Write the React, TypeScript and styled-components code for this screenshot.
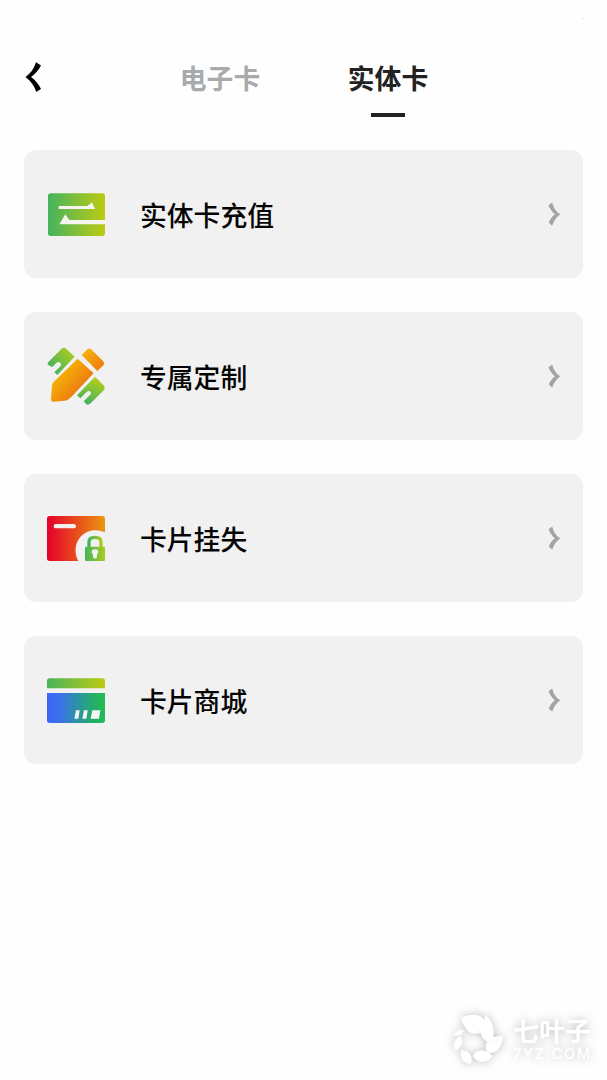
import React from "react";
import styled, { createGlobalStyle } from "styled-components";

const GlobalStyle = createGlobalStyle`
  * { box-sizing: border-box; }
  body { margin: 0; background: #fefefe; font-family: "Noto Sans CJK SC", sans-serif; }
`;

const Screen = styled.div`
  position: relative;
  width: 607px;
  height: 1080px;
  overflow: hidden;
  display: flex;
  flex-direction: column;
  background: #fefefe;
`;

const StatusDot = styled.i`
  position: absolute;
  left: 583px;
  top: 18px;
  width: 1px;
  height: 1px;
  background: #d2d2d2;
`;

const Header = styled.header`
  display: flex;
  align-items: flex-start;
  height: 150px;
  padding: 59px 0 0 20px;
`;

const BackButton = styled.button`
  width: 30px;
  height: 36px;
  padding: 0;
  border: 0;
  background: none;
  svg { display: block; }
`;

const Tabs = styled.nav`
  display: flex;
  gap: 88px;
  margin: -1px 0 0 130px;
`;

const Tab = styled.div<{ $active?: boolean }>`
  display: flex;
  flex-direction: column;
  align-items: center;
  width: 80px;
  font-size: 26.8px;
  line-height: 40px;
  font-weight: 700;
  white-space: nowrap;
  color: ${(p) => (p.$active ? "#222" : "#a9aaac")};
  &::after {
    content: "";
    width: 34px;
    height: 3.5px;
    margin-top: 15px;
    background: ${(p) => (p.$active ? "#222" : "transparent")};
  }
`;

const List = styled.main`
  display: flex;
  flex-direction: column;
  gap: 34px;
  padding: 0 24px;
`;

const Card = styled.div`
  display: flex;
  align-items: center;
  height: 128px;
  padding: 0 21px 0 22px;
  border-radius: 12px;
  background: #f1f1f1;
`;

const Label = styled.span`
  flex: 1;
  margin-left: 34px;
  padding-top: 2px;
  font-size: 26.8px;
  line-height: 40px;
  font-weight: 500;
  color: #050505;
`;

const Watermark = styled.div`
  position: absolute;
  left: 452px;
  top: 1008px;
  display: flex;
  align-items: center;
  color: #fff;
  filter: drop-shadow(0 0 5px rgba(0, 0, 0, 0.26));
`;

const WatermarkText = styled.div`
  display: flex;
  flex-direction: column;
  margin: 4px 0 0 9px;
  white-space: nowrap;
`;

const WatermarkName = styled.span`
  font-size: 26px;
  line-height: 26px;
  font-weight: 700;
`;

const WatermarkSite = styled.span`
  margin-top: 2px;
  font-family: Inter, sans-serif;
  font-size: 14.5px;
  line-height: 18px;
  font-weight: 500;
  letter-spacing: 1.8px;
`;

const Icon = ({ id, top, children }: { id: string; top: number; children: React.ReactNode }) => (
  <svg width="60" height="60" viewBox={`30 ${top} 180 180`} aria-hidden="true" data-icon={id}>
    {children}
  </svg>
);

const Gradient = ({ id, from, to }: { id: string; from: string; to: string }) => (
  <linearGradient id={id} x1="0" y1="0" x2="1" y2="0">
    <stop offset="0" stopColor={from} />
    <stop offset="1" stopColor={to} />
  </linearGradient>
);

const RechargeIcon = () => (
  <Icon id="recharge" top={12}>
    <defs><Gradient id="rg" from="#45b35f" to="#bdca12" /></defs>
    <rect x="36" y="40" width="171" height="128" rx="8" fill="url(#rg)" />
    <path d="M68 78H154L168 67L177 87H68ZM70 133L88 103L100 120H208V133Z" fill="#f4f5ee" />
  </Icon>
);

const CustomIcon = () => (
  <Icon id="custom" top={19}>
    <defs>
      <linearGradient id="pg" x1="0.1" y1="0.1" x2="0.8" y2="0.75">
        <stop offset="0" stopColor="#f8c500" /><stop offset="1" stopColor="#ec7413" />
      </linearGradient>
      <linearGradient id="eg" x1="0" y1="0" x2="1" y2="1">
        <stop offset="0" stopColor="#f6bd08" /><stop offset="1" stopColor="#ed7214" />
      </linearGradient>
      <linearGradient id="lg" x1="0.2" y1="0.8" x2="0.9" y2="0.2">
        <stop offset="0" stopColor="#49b45c" /><stop offset="1" stopColor="#a9cc25" />
      </linearGradient>
      <linearGradient id="gg" x1="0.3" y1="0.9" x2="0.65" y2="0">
        <stop offset="0" stopColor="#49b45c" /><stop offset="1" stopColor="#b7cf18" />
      </linearGradient>
    </defs>
    <path d="M35 69L76 28Q84 21 91 27L116 51L64 106L55 98L74 79Q77 74 73 69Q67 65 62 69L49 82Q41 81 35 74Z" fill="url(#lg)" />
    <path d="M177 111L205 139Q208 144 204 151L164 191Q157 197 151 194L143 185L164 164Q167 159 162 155Q157 152 152 157L133 176L123 167Z" fill="url(#gg)" />
    <path d="M125 57L173 101L105 173Q96 183 86 183L51 186Q45 186 45 179L48 137Q48 132 52 128Z" fill="url(#pg)" />
    <path d="M137 46L154 29Q160 24 167 30L201 64Q207 70 203 76L184 94Z" fill="url(#eg)" />
  </Icon>
);

const LossIcon = () => (
  <Icon id="loss" top={9}>
    <defs>
      <Gradient id="og" from="#e5002b" to="#ea960e" />
      <Gradient id="kg" from="#45b35d" to="#a9cb1f" />
    </defs>
    <rect x="33" y="33" width="174" height="135" rx="8" fill="url(#og)" />
    <rect x="53" y="57" width="67" height="13" rx="6.5" fill="#f8eeeb" />
    <path d="M127 169C108 131 123 94 155 80Q181 70 209 83V170Z" fill="#f1f1f1" />
    <path d="M159 128V111Q159 97 177 97Q195 97 195 111V128" fill="none" stroke="url(#kg)" strokeWidth="10" />
    <rect x="147" y="125" width="60" height="43" rx="3" fill="url(#kg)" />
    <path d="M171 148Q166 145 167 140Q168 133 177 133Q186 133 187 140Q188 145 183 148V157Q177 165 171 157Z" fill="#f1f1f1" />
  </Icon>
);

const MallIcon = () => (
  <Icon id="mall" top={14}>
    <defs>
      <Gradient id="tg" from="#4ab45c" to="#bdca12" />
      <linearGradient id="bg">
        <stop offset="0" stopColor="#3c66f8" /><stop offset="0.2" stopColor="#3a70ee" />
        <stop offset="0.75" stopColor="#25a974" /><stop offset="1" stopColor="#23bd4f" />
      </linearGradient>
    </defs>
    <path d="M33 69V47Q33 39 41 39H199Q207 39 207 47V69Z" fill="url(#tg)" />
    <path d="M33 83H207V165Q207 173 199 173H41Q33 173 33 165Z" fill="url(#bg)" />
    <path d="M120 135H131L127 160H115ZM144 135H155L151 160H139ZM169 135H193L189 160H164Z" fill="#f4f5f5" />
  </Icon>
);

const Chevron = () => (
  <svg width="16" height="28" viewBox="0 0 16 28" aria-hidden="true">
    <path d="M6.2 2.5C7.5 7.5 9.6 11.3 14.4 14.3C10.3 17.2 7.8 20.7 6.2 25.7L2.8 22.6C4 19.1 6.2 16.5 8.9 14.3C6.2 12 3.8 9 2.6 5.3Z" fill="#a3a4a7" />
  </svg>
);

const Leaves = () => (
  <svg width="52" height="60" viewBox="36 24 156 180" fill="#fff" aria-hidden="true">
    <path d="M63 53C86 42 121 39 134 61C135 52 132 48 132 44C151 51 165 81 160 111C169 111 173 107 188 108C188 137 174 159 147 159C133 151 136 135 142 126C128 116 124 106 122 98C102 105 77 102 63 53Z" />
    <path d="M98 168C112 146 139 146 157 169C143 191 115 193 98 168ZM64 151C88 151 101 171 92 192C70 189 59 175 64 151ZM45 151C37 130 46 113 62 109C72 128 63 144 45 151ZM43 107C45 94 57 87 71 91C67 105 57 111 43 107Z" />
    <path d="M80 61Q109 74 122 98M142 126Q164 125 176 120" fill="none" stroke="#eee" strokeWidth="1.5" />
  </svg>
);

const items = [
  { label: "实体卡充值", Glyph: RechargeIcon },
  { label: "专属定制", Glyph: CustomIcon },
  { label: "卡片挂失", Glyph: LossIcon },
  { label: "卡片商城", Glyph: MallIcon },
];

export default function App() {
  return (
    <Screen>
      <GlobalStyle />
      <StatusDot />
      <Header>
        <BackButton aria-label="返回">
          <svg width="30" height="36" viewBox="0 0 30 36">
            <path d="M16 3.2L21 6.5C18.7 11 15.4 14.8 11 18C15.5 21.2 18.8 25.2 21 30L16.2 33C14.3 26.8 11 22 5.5 18C10.7 14.4 14 9.5 16 3.2Z" />
          </svg>
        </BackButton>
        <Tabs>
          <Tab>电子卡</Tab>
          <Tab $active>实体卡</Tab>
        </Tabs>
      </Header>
      <List>
        {items.map(({ label, Glyph }) => (
          <Card key={label}>
            <Glyph />
            <Label>{label}</Label>
            <Chevron />
          </Card>
        ))}
      </List>
      <Watermark>
        <Leaves />
        <WatermarkText>
          <WatermarkName>七叶子</WatermarkName>
          <WatermarkSite>7YZ.COM</WatermarkSite>
        </WatermarkText>
      </Watermark>
    </Screen>
  );
}
